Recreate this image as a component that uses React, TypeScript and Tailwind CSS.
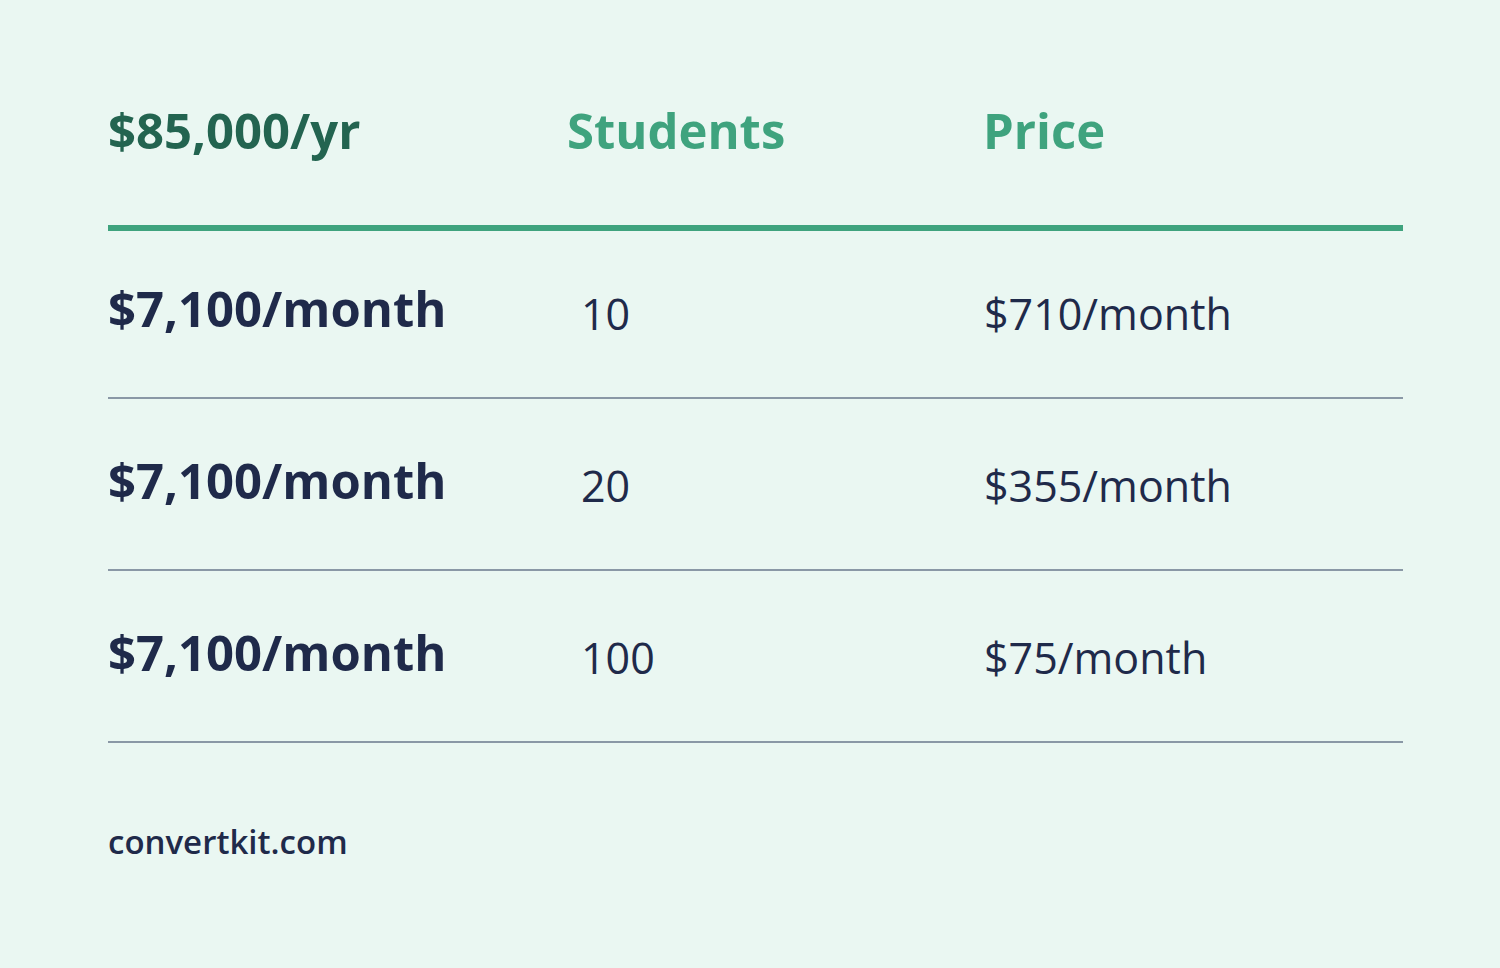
export default function App() {
  const rows = [
    { a: "$7,100/month", b: "10", c: "$710/month" },
    { a: "$7,100/month", b: "20", c: "$355/month" },
    { a: "$7,100/month", b: "100", c: "$75/month" },
  ];
  return (
    <div
      className="w-[1500px] h-[968px] bg-[#EAF7F2] pl-[108px] pr-[97px] pt-[97px]"
      style={{ fontFamily: '"Open Sans", sans-serif' }}
    >
      <div className="flex items-start h-[134px] border-b-[6px] border-[#3FA37E]">
        <div className="w-[459px] text-[49px] font-bold leading-[66px] text-[#236450]">$85,000/yr</div>
        <div className="w-[417px] text-[49px] font-bold leading-[66px] text-[#3FA37E]">Students</div>
        <div className="-ml-[1px] text-[49px] font-bold leading-[66px] text-[#3FA37E]">Price</div>
      </div>
      {rows.map((r, i) => (
        <div
          key={i}
          className={
            "flex items-start border-b-2 border-[#8A98A6] " +
            (i === 0 ? "h-[168px] pt-[44px]" : "h-[172px] pt-[48px]")
          }
        >
          <div className="w-[459px] text-[49px] font-bold leading-[66px] text-[#1F2A4A]">{r.a}</div>
          <div className="w-[417px] pl-[14px] mt-[6px] text-[43px] leading-[66px] text-[#1F2A4A]">{r.b}</div>
          <div className="mt-[6px] text-[43px] leading-[66px] text-[#1F2A4A]">{r.c}</div>
        </div>
      ))}
      <div className="pt-[79px] text-[33px] font-semibold leading-[40px] text-[#1F2A4A]">convertkit.com</div>
    </div>
  );
}
